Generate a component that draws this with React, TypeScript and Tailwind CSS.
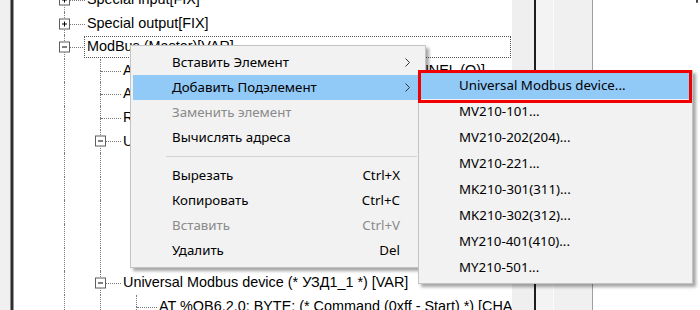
import React from "react";

type Row = {
  level: number;
  text: string;
  box?: "+" | "-";
  last?: boolean;
  focused?: boolean;
};

const rows: Row[] = [
  { level: 0, text: "Special input[FIX]", box: "+" },
  { level: 0, text: "Special output[FIX]", box: "+" },
  { level: 0, text: "ModBus (Master)[VAR]", box: "-", focused: true },
  { level: 1, text: "AT %QB6.0.0: BYTE; (* Speed setting *) [CHANNEL (O)]" },
  { level: 1, text: "AT %QB6.0.1: BYTE; (* Status *) [CHANNEL (O)]" },
  { level: 1, text: "Reserved[VAR]" },
  { level: 1, text: "Universal Modbus device (* УЗД1 *) [VAR]", box: "-" },
  { level: 2, text: "AT %QB6.1.0: BYTE; (* Command *) [CHANNEL (O)]" },
  { level: 2, text: "AT %QB6.1.1: BYTE; (* Mode *) [CHANNEL (O)]" },
  { level: 2, text: "AT %IB6.1.2: BYTE; (* State *) [CHANNEL (I)]" },
  { level: 2, text: "AT %IB6.1.3: BYTE; (* Error *) [CHANNEL (I)]" },
  { level: 2, text: "AT %IB6.1.4: BYTE; (* Position *) [CHANNEL (I)]", last: true },
  { level: 1, text: "Universal Modbus device (* УЗД1_1 *) [VAR]", box: "-" },
  { level: 2, text: "AT %QB6.2.0: BYTE; (* Command (0xff - Start) *) [CHANNEL (O)]" },
];

const dot = "border-dotted border-[#7a7a7a]";

function ExpandBox({ kind }: { kind: "+" | "-" }) {
  return (
    <div className="absolute left-[13px] top-1/2 -translate-y-1/2 w-[11px] h-[11px] border border-[#5e5e5e] bg-white flex items-center justify-center z-10">
      <div className="relative w-[5px] h-[5px] flex items-center justify-center">
        <div className="w-[5px] h-[1px] bg-black" />
        {kind === "+" && <div className="absolute left-[2px] top-0 w-[1px] h-[5px] bg-black" />}
      </div>
    </div>
  );
}

function TreeRow({ row }: { row: Row }) {
  const anc = [];
  for (let l = 0; l < row.level; l++) {
    anc.push(
      <div key={l} className="relative w-[36px] h-full shrink-0">
        <div className={`absolute left-[18px] top-0 bottom-0 border-l ${dot}`} />
      </div>
    );
  }
  return (
    <div className="flex items-center h-[23.6px] whitespace-nowrap">
      {anc}
      <div className="relative w-[41px] h-full shrink-0">
        <div className={`absolute left-[18px] top-0 h-1/2 border-l ${dot}`} />
        {!row.last && <div className={`absolute left-[18px] top-1/2 bottom-0 border-l ${dot}`} />}
        <div className={`absolute left-[19px] right-[2px] top-1/2 border-t ${dot}`} />
        {row.box && <ExpandBox kind={row.box} />}
      </div>
      {row.focused ? (
        <div className="ml-[-3px] pl-[2px] w-[427px] h-[22px] flex items-center border border-dotted border-[#555]">
          {row.text}
        </div>
      ) : (
        <span>{row.text}</span>
      )}
    </div>
  );
}

function Chevron() {
  return (
    <svg width="5" height="9" viewBox="0 0 5 9" className="block">
      <path d="M0.5 0.5 L4.5 4.5 L0.5 8.5" fill="none" stroke="#333" strokeWidth="1" />
    </svg>
  );
}

type MItem = { label: string; shortcut?: string; disabled?: boolean; sub?: boolean; active?: boolean; sep?: boolean };

const mainItems: MItem[] = [
  { label: "Вставить Элемент", sub: true },
  { label: "Добавить Подэлемент", sub: true, active: true },
  { label: "Заменить элемент", disabled: true },
  { label: "Вычислять адреса" },
  { label: "", sep: true },
  { label: "Вырезать", shortcut: "Ctrl+X" },
  { label: "Копировать", shortcut: "Ctrl+C" },
  { label: "Вставить", shortcut: "Ctrl+V", disabled: true },
  { label: "Удалить", shortcut: "Del" },
];

const subItems = [
  "Universal Modbus device...",
  "MV210-101...",
  "MV210-202(204)...",
  "MV210-221...",
  "MK210-301(311)...",
  "MK210-302(312)...",
  "MY210-401(410)...",
  "MY210-501...",
];

export default function App() {
  return (
    <div
      className="relative w-[700px] h-[310px] overflow-hidden bg-white flex text-black"
      style={{ fontFamily: '"Liberation Sans", Arial, sans-serif' }}
    >
      <div className="w-[10px] shrink-0 bg-[#f0f0f0]" />
      <div className="w-[1px] shrink-0 bg-[#8a8a8a]" />
      <div className="w-[2px] shrink-0 bg-[#2e2e2e]" />
      <div className="w-[1px] shrink-0 bg-[#9a9a9a]" />
      <div className="w-[498px] shrink-0 overflow-hidden bg-white text-[14.4px]">
        <div className="mt-[-11.9px] pl-[32px]">
          {rows.map((r, i) => (
            <TreeRow key={i} row={r} />
          ))}
        </div>
      </div>
      <div className="w-[22px] shrink-0 bg-[#efefef]" />
      <div className="w-[2px] shrink-0 bg-[#1e1e1e]" />
      <div className="w-[17px] shrink-0 bg-[#f3f3f3]" />
      <div className="w-[1px] shrink-0 bg-[#fbfbfb]" />
      <div className="w-[38px] shrink-0 bg-[#f0f0f0]" />
      <div className="w-[1px] shrink-0 bg-[#a0a0a0]" />
      <div className="flex-1 bg-white flex justify-end items-start pr-[2px]">
        <div className="w-[2px] h-[3px] bg-[#444] rounded-b-full" />
      </div>

      {/* Context menu */}
      <div
        className="absolute left-[130px] top-[45px] w-[296px] bg-[#f2f2f2] border border-[#c4c4c4] py-[4px] shadow-[3px_3px_3px_rgba(0,0,0,0.35)] text-[13.3px]"
        style={{ fontFamily: '"Noto Sans", "Open Sans", sans-serif' }}
      >
        {mainItems.map((it, i) =>
          it.sep ? (
            <div key={i} className="h-[13px] flex items-center pl-[35px] pr-[8px]">
              <div className="h-[1px] w-full bg-[#d4d4d4]" />
            </div>
          ) : (
            <div
              key={i}
              className={`mx-[2px] h-[25px] flex items-center pl-[39px] ${it.active ? "bg-[#91c9f7]" : ""} ${
                it.disabled ? "text-[#8a8a8a]" : "text-black"
              }`}
            >
              <span className="flex-1">{it.label}</span>
              {it.shortcut && <span>{it.shortcut}</span>}
              <div className="w-[23px] pl-[5px] flex items-center">{it.sub && <Chevron />}</div>
            </div>
          )
        )}
      </div>

      {/* Submenu */}
      <div
        className="absolute left-[418px] top-[70px] w-[275px] bg-[#f2f2f2] border border-[#c4c4c4] py-[2px] shadow-[3px_3px_3px_rgba(0,0,0,0.35)] text-[13.3px]"
        style={{ fontFamily: '"Noto Sans", "Open Sans", sans-serif' }}
      >
        {subItems.map((s, i) => (
          <div key={i} className={`mx-[2px] h-[26px] flex items-center pl-[38px] ${i === 0 ? "bg-[#91c9f7]" : ""}`}>
            {s}
          </div>
        ))}
      </div>

      {/* Red annotation frame */}
      <div className="absolute left-[418px] top-[70px] w-[274px] h-[33px] border-[3px] border-[#f00000]" />
    </div>
  );
}
